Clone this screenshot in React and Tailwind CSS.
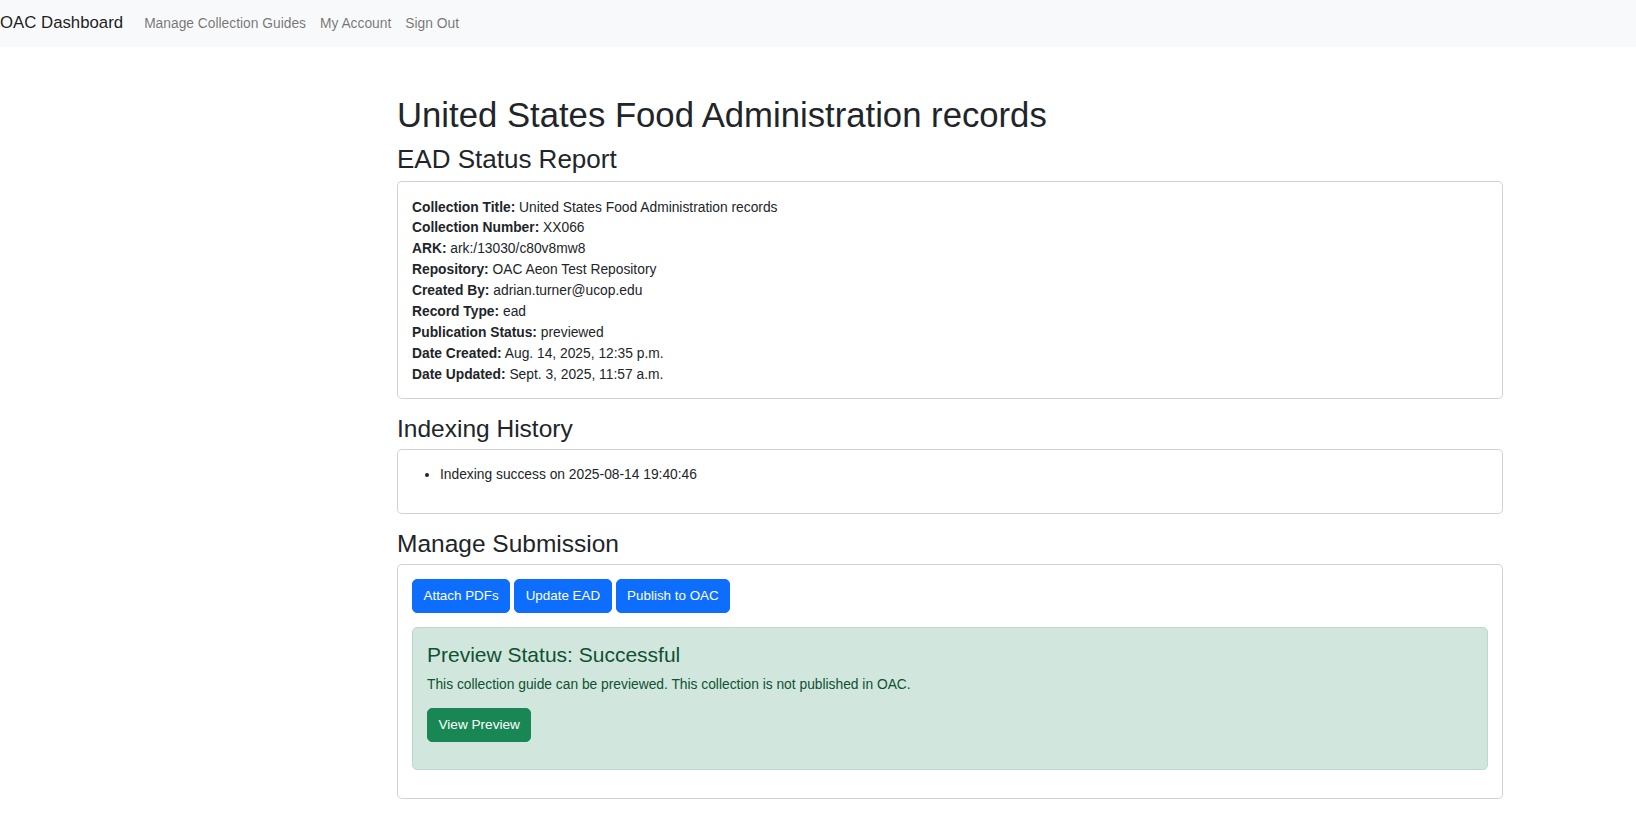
import React from 'react';

const details = [
    ['Collection Title:', 'United States Food Administration records'],
    ['Collection Number:', 'XX066'],
    ['ARK:', 'ark:/13030/c80v8mw8'],
    ['Repository:', 'OAC Aeon Test Repository'],
    ['Created By:', 'adrian.turner@ucop.edu'],
    ['Record Type:', 'ead'],
    ['Publication Status:', 'previewed'],
    ['Date Created:', 'Aug. 14, 2025, 12:35 p.m.'],
    ['Date Updated:', 'Sept. 3, 2025, 11:57 a.m.'],
];

// Navbar
const NavBar = () => (
    <nav className="h-[47px] bg-[#f8f9fa] flex items-center">
        <a href="#" className="text-[16.8px] leading-[26px] text-[rgba(0,0,0,0.9)] mr-[14px] pb-[1px]">OAC Dashboard</a>
        {['Manage Collection Guides', 'My Account', 'Sign Out'].map(label => (
            <a key={label} href="#" className="px-[7px] text-[13.8px] leading-[21px] text-[rgba(0,0,0,0.55)]">
                {label}
            </a>
        ))}
    </nav>
);

const Card = ({ children, className = 'p-[14px]' }) => (
    <div className={`border border-[rgba(0,0,0,0.175)] rounded-[5px] bg-white ${className}`}>
        {children}
    </div>
);

export default function App() {
    return (
        <div className="min-h-screen bg-white text-[#212529] text-[13.8px] leading-[20.9px] font-['Liberation_Sans',Arial,sans-serif]">
            <NavBar />
            <main className="ml-[397px] w-[1106px] pb-[26px]">
                <h1 className="text-[34.7px] leading-[42px] mt-[47px] mb-[8px]">United States Food Administration records</h1>
                <h2 className="text-[26px] leading-[31px] mb-[6px]">EAD Status Report</h2>
                <Card className="px-[14px] pt-[15.5px] pb-[12px]">
                    {details.map(([label, value]) => (
                        <div key={label}>
                            <strong className="font-bold">{label}</strong> {value}
                        </div>
                    ))}
                </Card>

                <h3 className="text-[24.5px] leading-[29.4px] mt-[15px] mb-[6px]">Indexing History</h3>
                <Card className="px-[14px] pt-[15px] pb-[13px]">
                    <ul className="list-disc pl-[28px] mb-[14px]">
                        <li>Indexing success on 2025-08-14 19:40:46</li>
                    </ul>
                </Card>

                <h3 className="text-[24.5px] leading-[29.4px] mt-[15.5px] mb-[5px]">Manage Submission</h3>
                <Card>
                    <div className="flex gap-[4px]">
                        {['Attach PDFs', 'Update EAD', 'Publish to OAC'].map(label => (
                            <button key={label} className="bg-[#0d6efd] text-white text-[13.4px] px-[10.5px] py-[5.5px] leading-[21px] rounded-[5px] border border-[#0d6efd]">
                                {label}
                            </button>
                        ))}
                    </div>
                    <div className="mt-[14px] mb-[14px] bg-[#d1e7dd] border border-[#badbcc] text-[#0f5132] rounded-[5px] p-[14px]">
                        <h4 className="text-[21px] leading-[25.2px] mb-[8px]">Preview Status: Successful</h4>
                        <p className="mb-[12px]">This collection guide can be previewed. This collection is not published in OAC.</p>
                        <button className="bg-[#198754] text-white text-[13.6px] px-[10.5px] py-[5.5px] leading-[21px] rounded-[5px] border border-[#198754] mb-[13px]">
                            View Preview
                        </button>
                    </div>
                </Card>
            </main>
        </div>
    );
}
